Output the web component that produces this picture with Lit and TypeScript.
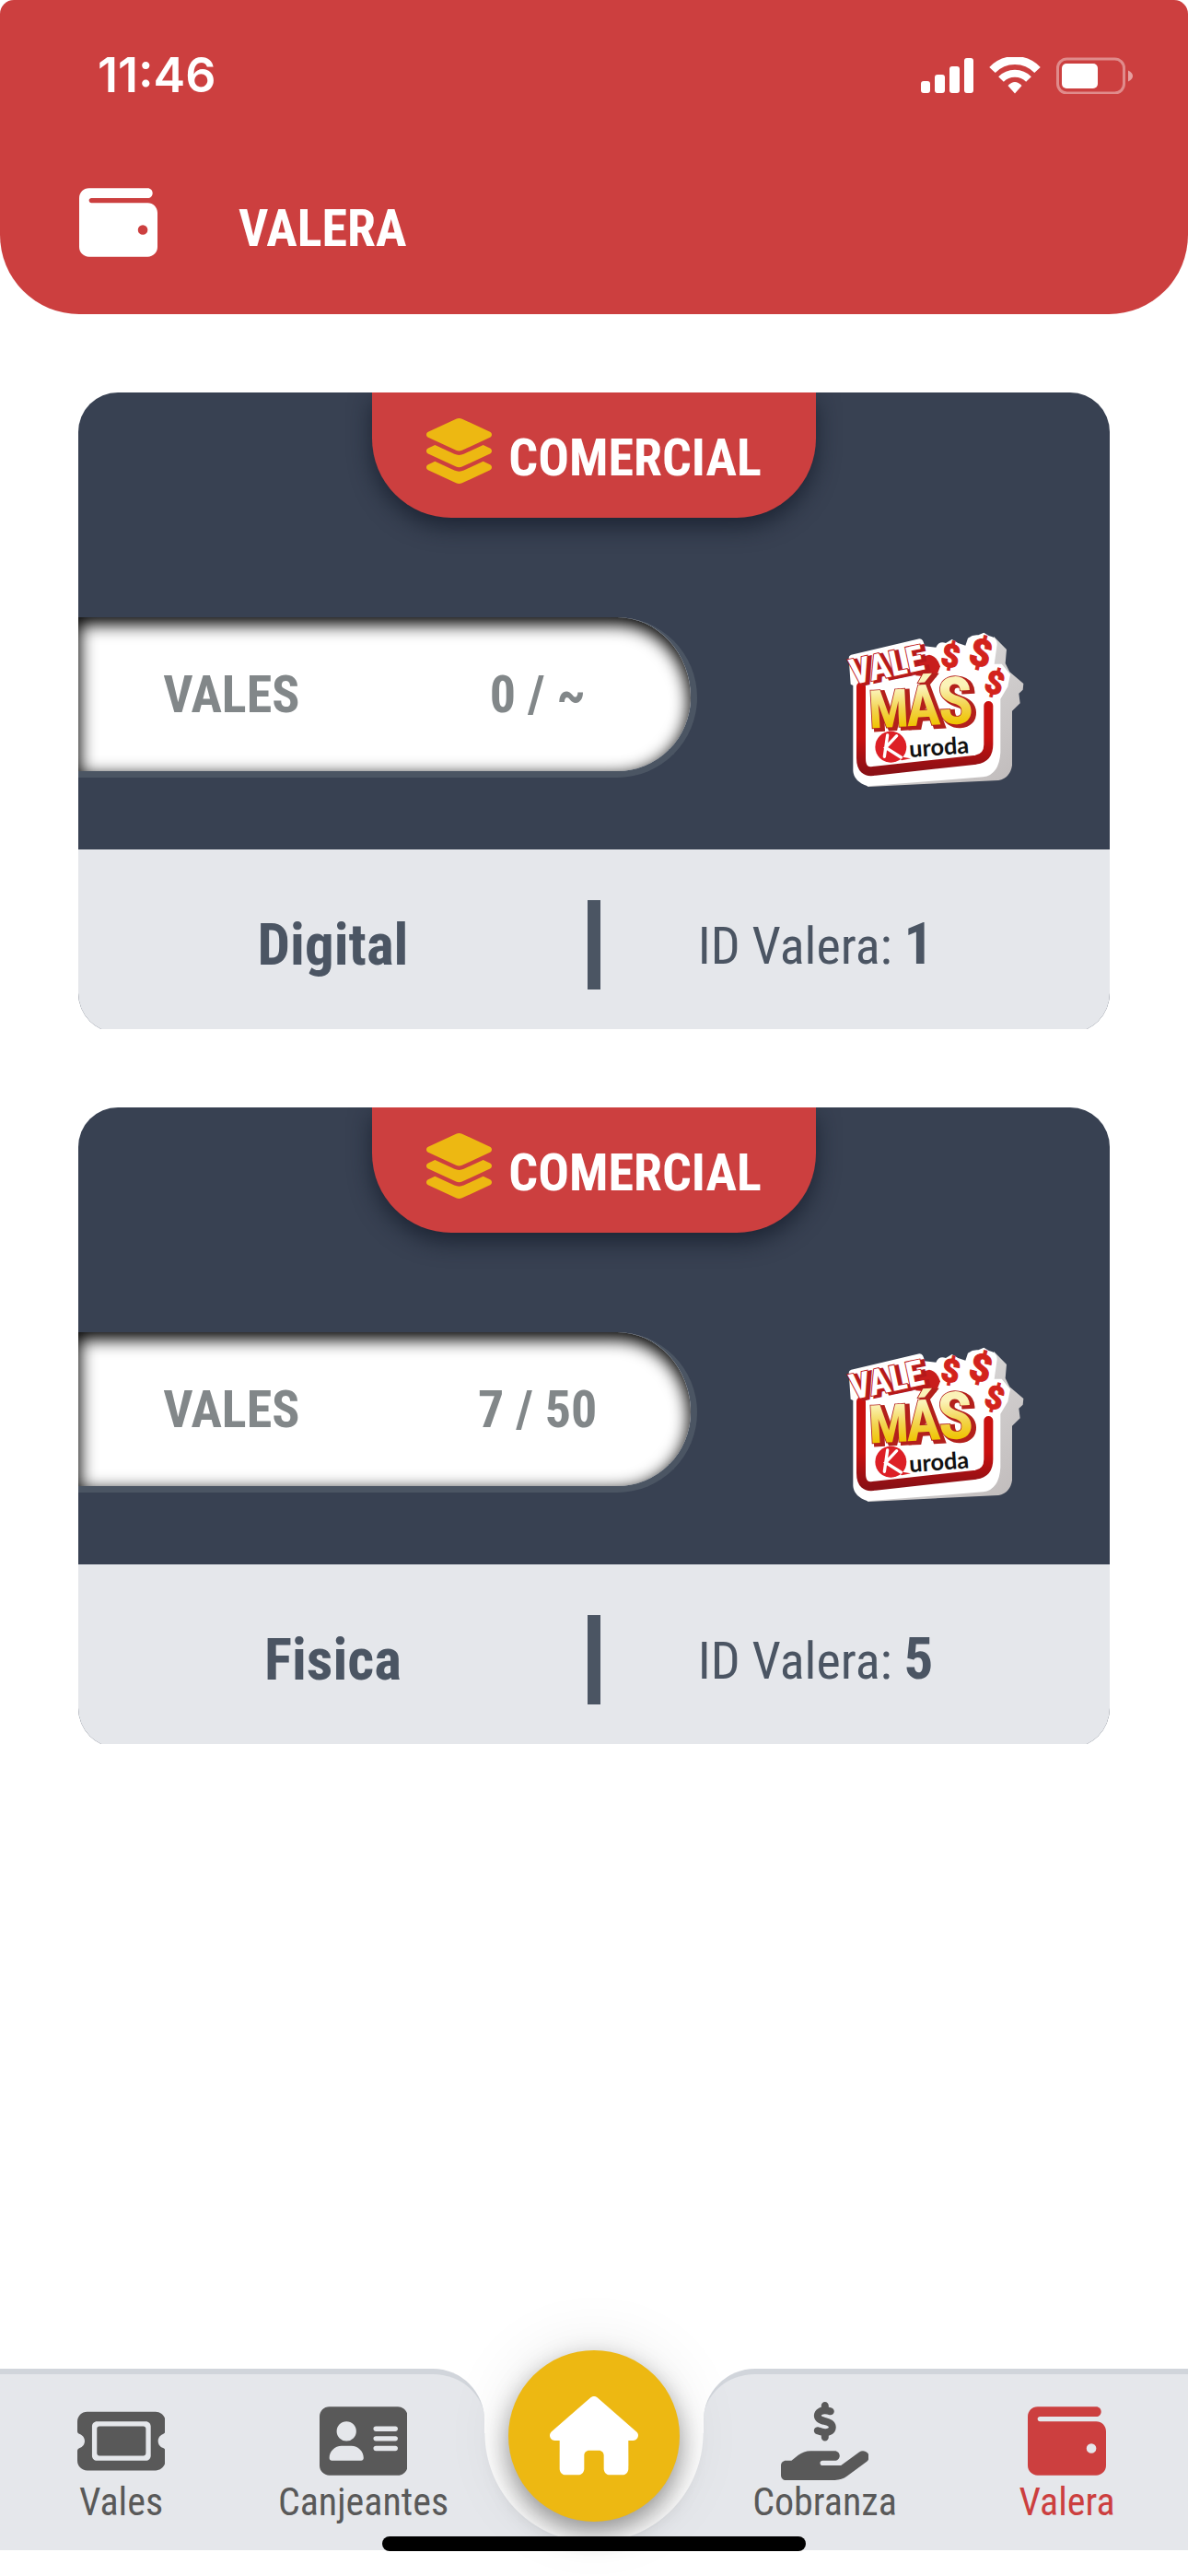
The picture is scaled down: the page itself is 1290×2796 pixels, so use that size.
import { LitElement, html, svg, css } from 'lit';
import { customElement, property, state } from 'lit/decorators.js';
import { classMap } from 'lit/directives/class-map.js';

interface Valera {
  id: number;
  kind: string;
  group: string;
  used: string;
  total: string;
}

interface NavItem {
  label: string;
  icon: string;
  active?: boolean;
}

const ICONS: Record<string, { box: string; d: string }> = {
  wallet: {
    box: '0 0 512 512',
    d: 'M64 32C28.7 32 0 60.7 0 96V416c0 35.3 28.7 64 64 64H448c35.3 0 64-28.7 64-64V192c0-35.3-28.7-64-64-64H80c-8.8 0-16-7.2-16-16s7.2-16 16-16H448c17.7 0 32-14.3 32-32s-14.3-32-32-32H64zM416 272a32 32 0 1 1 0 64 32 32 0 1 1 0-64z',
  },
  ticket: {
    box: '0 0 576 512',
    d: 'M64 64C28.7 64 0 92.7 0 128v64c0 8.8 7.4 15.7 15.7 18.6C34.5 217.1 48 235 48 256s-13.5 38.9-32.3 45.4C7.4 304.3 0 311.2 0 320v64c0 35.3 28.7 64 64 64H512c35.3 0 64-28.7 64-64V320c0-8.8-7.4-15.7-15.7-18.6C541.5 294.9 528 277 528 256s13.5-38.9 32.3-45.4c8.3-2.9 15.7-9.8 15.7-18.6V128c0-35.3-28.7-64-64-64H64zm64 112l0 160c0 8.8 7.2 16 16 16H432c8.8 0 16-7.2 16-16V176c0-8.8-7.2-16-16-16H144c-8.8 0-16 7.2-16 16zM96 160c0-17.7 14.3-32 32-32H448c17.7 0 32 14.3 32 32V352c0 17.7-14.3 32-32 32H128c-17.7 0-32-14.3-32-32V160z',
  },
  card: {
    box: '0 0 576 512',
    d: 'M64 32C28.7 32 0 60.7 0 96V416c0 35.3 28.7 64 64 64H512c35.3 0 64-28.7 64-64V96c0-35.3-28.7-64-64-64H64zm80 256h64c44.2 0 80 35.8 80 80c0 8.8-7.2 16-16 16H80c-8.8 0-16-7.2-16-16c0-44.2 35.8-80 80-80zm-32-96a64 64 0 1 1 128 0 64 64 0 1 1-128 0zm256-32H496c8.8 0 16 7.2 16 16s-7.2 16-16 16H368c-8.8 0-16-7.2-16-16s7.2-16 16-16zm0 64H496c8.8 0 16 7.2 16 16s-7.2 16-16 16H368c-8.8 0-16-7.2-16-16s7.2-16 16-16zm0 64H496c8.8 0 16 7.2 16 16s-7.2 16-16 16H368c-8.8 0-16-7.2-16-16s7.2-16 16-16z',
  },
  hand: {
    box: '0 0 576 512',
    d: 'M312 24V34.5c6.4 1.2 12.6 2.7 18.2 4.2c12.8 3.4 20.4 16.6 17 29.4s-16.6 20.4-29.4 17c-10.9-2.9-21.1-4.9-30.2-5c-7.3-.1-14.7 1.7-19.4 4.4c-2.1 1.3-3.1 2.4-3.5 3c-.3 .5-.7 1.2-.7 2.8c0 .3 0 .5 0 .6c.2 .2 .9 1.2 3.3 2.6c5.8 3.5 14.4 6.2 27.4 10.1l.9 .3c11.1 3.3 25.9 7.8 37.9 15.3c13.7 8.6 26.1 22.9 26.4 44.9c.3 22.5-11.4 38.9-26.7 48.5c-6.7 4.1-13.9 7-21.3 8.8V232c0 13.3-10.7 24-24 24s-24-10.7-24-24V220.6c-9.5-2.3-18.2-5.3-25.6-7.8c-2.1-.7-4.1-1.4-6-2c-12.6-4.2-19.4-17.8-15.2-30.4s17.8-19.4 30.4-15.2c2.6 .9 5 1.7 7.3 2.5c13.6 4.6 23.4 7.9 33.9 8.3c8 .3 15.1-1.6 19.2-4.1c1.9-1.2 2.8-2.2 3.2-2.9c.4-.6 .9-1.8 .8-4.1l0-.2c0-1 0-2.1-4-4.6c-5.7-3.6-14.3-6.4-27.1-10.3l-1.9-.6c-10.8-3.2-25-7.5-36.4-14.4c-13.5-8.1-26.5-22-26.6-44.1c-.1-22.9 12.9-38.6 27.7-47.4c6.4-3.8 13.3-6.4 20.2-8.2V24c0-13.3 10.7-24 24-24s24 10.7 24 24zM568.2 336.3c13.1 17.8 9.3 42.8-8.5 55.9L433.1 485.5c-23.4 17.2-51.6 26.5-80.7 26.5H192 32c-17.7 0-32-14.3-32-32V416c0-17.7 14.3-32 32-32H68.8l44.9-36c22.7-18.2 50.9-28 80-28H272h16 64c17.7 0 32 14.3 32 32s-14.3 32-32 32H288 272c-8.8 0-16 7.2-16 16s7.2 16 16 16H392.6l119.7-88.2c17.8-13.1 42.8-9.3 55.9 8.5z',
  },
  layers: {
    box: '32 0 512 512',
    d: 'M264.5 5.2c14.9-6.9 32.1-6.9 47 0l218.6 101c8.5 3.9 13.9 12.4 13.9 21.8s-5.4 17.9-13.9 21.8l-218.6 101c-14.9 6.9-32.1 6.9-47 0L45.9 149.8C37.4 145.8 32 137.3 32 128s5.4-17.9 13.9-21.8L264.5 5.2zM476.9 209.6l53.2 24.6c8.5 3.9 13.9 12.4 13.9 21.8s-5.4 17.9-13.9 21.8l-218.6 101c-14.9 6.9-32.1 6.9-47 0L45.9 277.8C37.4 273.8 32 265.3 32 256s5.4-17.9 13.9-21.8l53.2-24.6 152 70.2c23.4 10.8 50.4 10.8 73.8 0l152-70.2zm-152 198.2l152-70.2 53.2 24.6c8.5 3.9 13.9 12.4 13.9 21.8s-5.4 17.9-13.9 21.8l-218.6 101c-14.9 6.9-32.1 6.9-47 0L45.9 405.8C37.4 401.8 32 393.3 32 384s5.4-17.9 13.9-21.8l53.2-24.6 152 70.2c23.4 10.8 50.4 10.8 73.8 0z',
  },
  house: {
    box: '0 0 576 512',
    d: 'M575.8 255.5c0 18-15 32.1-32 32.1h-32l.7 160.2c0 2.7-.2 5.4-.5 8.1V472c0 22.1-17.9 40-40 40H456c-1.1 0-2.2 0-3.3-.1c-1.4 .1-2.8 .1-4.2 .1H416 392c-22.1 0-40-17.9-40-40V448 384c0-17.7-14.3-32-32-32H256c-17.7 0-32 14.3-32 32v64 24c0 22.1-17.9 40-40 40H160 128.1c-1.5 0-3-.1-4.5-.2c-1.2 .1-2.4 .2-3.6 .2H104c-22.1 0-40-17.9-40-40V360c0-.9 0-1.9 .1-2.8V287.6H32c-18 0-32-14-32-32.1c0-9 3-17 10-24L266.4 8c7-7 15-8 22-8s15 2 21 7L564.8 231.5c8 7 12 15 11 24z',
  },
};

const icon = (name: string) => svg`
  <svg class="icon" viewBox=${ICONS[name].box} fill="currentColor" aria-hidden="true">
    <path d=${ICONS[name].d}></path>
  </svg>
`;

/**
 * Sticker style brand logo
 */
@customElement('brand-logo')
export class BrandLogo extends LitElement {
  static styles = css`
    :host {
      display: block;
    }

    svg {
      display: block;
      width: 200px;
      height: 174px;
      overflow: visible;
    }

    text {
      font-family: 'Roboto Condensed', Roboto, sans-serif;
      font-weight: 700;
    }

    .vale {
      font-size: 116px;
    }

    .dollar text {
      font-family: Roboto, sans-serif;
      font-weight: 900;
      fill: #d3231c;
      stroke: #d3231c;
      stroke-width: 3;
      text-anchor: middle;
    }

    .kuroda {
      font-family: Lato, sans-serif;
      font-weight: 700;
      font-size: 76px;
      fill: #111;
    }
  `;

  render() {
    return html`
      <svg viewBox="51 0 600 522" role="img" aria-label="Vale Más Kuroda">
        <defs>
          <linearGradient id="gold" x1="0" y1="0" x2="0" y2="1">
            <stop offset="0.3" stop-color="#fbf3b8"></stop>
            <stop offset="0.55" stop-color="#f3d552"></stop>
            <stop offset="0.8" stop-color="#efc400"></stop>
          </linearGradient>
          <linearGradient id="frame" x1="0" y1="0" x2="0" y2="1">
            <stop offset="0.6" stop-color="#c9100f"></stop>
            <stop offset="1" stop-color="#8b1015"></stop>
          </linearGradient>
          <linearGradient id="side" x1="0" y1="0" x2="1" y2="1">
            <stop offset="0" stop-color="#e6e6e6"></stop>
            <stop offset="1" stop-color="#bfbaba"></stop>
          </linearGradient>
        </defs>

        <!-- extruded side -->
        <path fill="url(#side)" d="M540 62L582 105L578 150L592 178L637 216L635 236L622 248L626 280L600 305V482Q594 522 556 531L130 552L100 520L520 240Z"></path>

        <!-- white plate -->
        <path fill="#fff" d="M68 132Q68 125 76 122L298 70Q312 70 314 94L352 98Q362 76 384 84L404 72L424 84L448 92L456 68Q472 56 490 58L508 50L524 60Q556 66 550 96L542 152L566 152L594 186L586 226L562 266V440Q558 512 506 520L130 550Q84 534 82 500V222L74 218Z"></path>

        <path fill="none" stroke="url(#frame)" stroke-width="30" stroke-linecap="round" stroke-linejoin="round"
          d="M108 226V458Q108 510 154 500L482 464Q523 458 523 414V288"></path>
        <path fill="#c81e1c" d="M286 134L330 122Q356 126 366 160L352 196L286 190Z"></path>

        <g class="dollar">
          <text x="400" y="162" font-size="104" transform="rotate(10 400 125)">$</text>
          <text x="498" y="158" font-size="122" transform="rotate(14 498 115)">$</text>
          <text x="543" y="249" font-size="104" transform="rotate(16 543 212)">$</text>
        </g>

        <g class="vale" transform="rotate(-12 80 220)">
          <text x="90" y="226" fill="#b51a1a" stroke="#b51a1a" stroke-width="10">VALE</text>
          <text x="80" y="220" fill="#fff" stroke="#c0201f" stroke-width="6" paint-order="stroke">VALE</text>
        </g>

        <g font-size="172" transform="rotate(-3 140 360)">
          <text x="146" y="368" fill="#b3201c" stroke="#b3201c" stroke-width="12"
            >M<tspan dx="-8" font-size="186">Á</tspan><tspan dx="-8" font-size="214">S</tspan></text>
          <text x="136" y="361" fill="url(#gold)" stroke="#b3201c" stroke-width="5" paint-order="stroke"
            >M<tspan dx="-8" font-size="186">Á</tspan><tspan dx="-8" font-size="214">S</tspan></text>
        </g>

        <circle cx="205" cy="422" r="51" fill="#dd1f26"></circle>
        <path d="M226 452L270 460L240 466Z" fill="#dd1f26"></path>
        <path d="M194 384L184 454M224 386L188 424L238 456" fill="none" stroke="#fff" stroke-width="10" stroke-linecap="round"></path>
        <text class="kuroda" x="266" y="456" transform="rotate(-4 266 456)">uroda</text>
      </svg>
    `;
  }
}

/**
 * Card with the counters of one voucher book
 */
@customElement('valera-card')
export class ValeraCard extends LitElement {
  @property({ attribute: false }) valera!: Valera;

  /* the last 4px are cut off, which leaves the lower corners slightly open */
  static styles = css`
    :host {
      display: block;
      overflow: hidden;
      border-radius: 43px;
      clip-path: inset(0 0 4px);
      background: #384152;
      color: #4b5563;
    }

    .body {
      display: flex;
      flex-direction: column;
      align-items: center;
      padding-bottom: 78px;
    }

    .group {
      display: flex;
      align-items: flex-end;
      justify-content: center;
      gap: 18px;
      box-sizing: border-box;
      min-width: 43%;
      height: 136px;
      padding: 0 32px 37px;
      border-radius: 0 0 86px 86px;
      background: #cc3f3f;
      box-shadow: 0 10px 24px rgba(17, 24, 39, 0.7);
      color: #fff;
      font-size: 56px;
      font-weight: 700;
      line-height: 56px;
    }

    .icon {
      width: 71px;
      height: 71px;
      color: #edb812;
    }

    .row {
      display: flex;
      align-self: stretch;
      margin-top: 108px;
    }

    .count {
      display: grid;
      grid-template-columns: 1fr 1fr;
      align-items: center;
      box-sizing: border-box;
      width: 60%;
      height: 174px;
      border-right: 7px solid #4b5563;
      border-bottom: 7px solid #4b5563;
      border-radius: 0 87px 87px 0;
      background: #fff;
      box-shadow: inset 0 6px 18px 2px #000;
      color: #828789;
      font-size: 56px;
      font-weight: 700;
      line-height: 64px;
      text-align: center;
    }

    .brand {
      display: flex;
      flex: 1;
      justify-content: center;
      padding-left: 70px;
    }

    .foot {
      display: grid;
      grid-template-columns: 1fr 14px 1fr;
      align-items: center;
      box-sizing: border-box;
      height: 199px;
      padding: 12px 0 4px;
      background: #e5e7eb;
      font-size: 56px;
      line-height: 72px;
      text-align: center;
    }

    .bar {
      height: 97px;
      background: #4b5563;
    }

    .foot strong {
      font-size: 63px;
      font-weight: 700;
    }

    .id {
      padding-right: 86px;
    }
  `;

  render() {
    const { id, kind, group, used, total } = this.valera;
    return html`
      <div class="body">
        <div class="group">${icon('layers')}<span>${group}</span></div>
        <div class="row">
          <div class="count">
            <span>VALES</span>
            <span>${used} / ${total}</span>
          </div>
          <div class="brand"><brand-logo></brand-logo></div>
        </div>
      </div>
      <div class="foot">
        <strong>${kind}</strong>
        <span class="bar"></span>
        <span class="id">ID Valera: <strong>${id}</strong></span>
      </div>
    `;
  }
}

@customElement('app-root')
export class AppRoot extends LitElement {
  @state() private valeras: Valera[] = [
    { id: 1, kind: 'Digital', group: 'COMERCIAL', used: '0', total: '~' },
    { id: 5, kind: 'Fisica', group: 'COMERCIAL', used: '7', total: '50' },
  ];

  private left: NavItem[] = [
    { label: 'Vales', icon: 'ticket' },
    { label: 'Canjeantes', icon: 'card' },
  ];

  private right: NavItem[] = [
    { label: 'Cobranza', icon: 'hand' },
    { label: 'Valera', icon: 'wallet', active: true },
  ];

  static styles = css`
    :host {
      display: flex;
      flex-direction: column;
      min-height: 100vh;
      background: #fff;
      font-family: 'Roboto Condensed', Roboto, sans-serif;
    }

    header {
      padding-bottom: 57px;
      border-radius: 15px 15px 86px 86px;
      background: #cc3f3f;
      color: #fff;
    }

    .status {
      display: flex;
      align-items: center;
      justify-content: space-between;
      padding: 52px 60px 0 106px;
      font-family: Inter, sans-serif;
      font-size: 52px;
      font-weight: 600;
      line-height: 60px;
    }

    .status svg {
      display: block;
      width: 230px;
      height: 40px;
    }

    .title {
      display: flex;
      align-items: flex-end;
      gap: 88px;
      margin-top: 87px;
      padding: 0 86px;
    }

    .title .icon {
      width: 85px;
      height: 85px;
    }

    h1 {
      margin: 0;
      font-size: 56px;
      font-weight: 700;
      line-height: 72px;
    }

    main {
      display: flex;
      flex: 1;
      flex-direction: column;
      gap: 81px;
      padding: 85px 85px 0;
    }

    nav {
      position: relative;
      display: flex;
      padding-bottom: 28px;
    }

    .panel {
      display: grid;
      flex: 1;
      grid-template-columns: 1fr 1fr;
      box-sizing: border-box;
      height: 197px;
      border-top: 6px solid #d1d5db;
      background: #e5e7eb;
    }

    .panel.left {
      border-top-right-radius: 56px;
    }

    .panel.right {
      border-top-left-radius: 56px;
    }

    .item {
      display: flex;
      flex-direction: column;
      align-items: center;
      padding-top: 30px;
      color: #595959;
      font-size: 42px;
      line-height: 48px;
      text-decoration: none;
    }

    .item .icon {
      height: 85px;
    }

    .item.active {
      color: #cc3f3f;
    }

    /* white notch under the round button */
    .notch {
      position: relative;
      width: 238px;
      height: 197px;
      background:
        linear-gradient(#fff, #fff) top / 100% 70px no-repeat,
        radial-gradient(circle at 50% 70px, #fff 118px, #e5e7eb 119px);
    }

    .home {
      position: absolute;
      top: -20px;
      left: 26px;
      display: flex;
      align-items: center;
      justify-content: center;
      width: 186px;
      height: 186px;
      border-radius: 50%;
      background: #edb812;
      box-shadow: 0 12px 28px rgba(0, 0, 0, 0.4), 0 0 72px rgba(0, 0, 0, 0.1);
      color: #fff;
    }

    .home .icon {
      width: 96px;
    }

    .indicator {
      position: absolute;
      bottom: 27px;
      left: 50%;
      width: 460px;
      height: 16px;
      margin-left: -230px;
      border-radius: 8px;
      background: #000;
    }
  `;

  private renderItem(item: NavItem) {
    return html`
      <a href="#${item.label}" class=${classMap({ item: true, active: !!item.active })}>
        ${icon(item.icon)}
        <span>${item.label}</span>
      </a>
    `;
  }

  render() {
    return html`
      <header>
        <div class="status">
          <span>11:46</span>
          <svg viewBox="0 0 230 40" fill="#fff" aria-hidden="true">
            <rect x="0" y="26" width="10" height="13" rx="3"></rect>
            <rect x="15" y="19" width="11" height="20" rx="3"></rect>
            <rect x="31" y="10" width="11" height="29" rx="3"></rect>
            <rect x="47" y="1" width="10" height="38" rx="3"></rect>
            <g fill="none" stroke="#fff">
              <path stroke-width="9" d="M77.500 14A34 34 0 0 1 126.500 14"></path>
              <path stroke-width="8" d="M87 24A21 21 0 0 1 117 24"></path>
            </g>
            <path d="M102 39.500L94.500 31Q102 23 109.500 31Z"></path>
            <rect x="148.500" y="2" width="72" height="37" rx="10" fill="none" stroke="#fff" stroke-opacity="0.4" stroke-width="3"></rect>
            <rect x="153" y="7" width="39" height="27" rx="5"></rect>
            <path fill-opacity="0.500" d="M225 14.500Q230 17 230 20.500T225 26.500Z"></path>
          </svg>
        </div>
        <div class="title">
          ${icon('wallet')}
          <h1>VALERA</h1>
        </div>
      </header>

      <main>
        ${this.valeras.map((valera) => html`<valera-card .valera=${valera}></valera-card>`)}
      </main>

      <nav>
        <div class="panel left">${this.left.map((item) => this.renderItem(item))}</div>
        <div class="notch">
          <a class="home" href="#Inicio" aria-label="Inicio">${icon('house')}</a>
        </div>
        <div class="panel right">${this.right.map((item) => this.renderItem(item))}</div>
        <div class="indicator"></div>
      </nav>
    `;
  }
}
